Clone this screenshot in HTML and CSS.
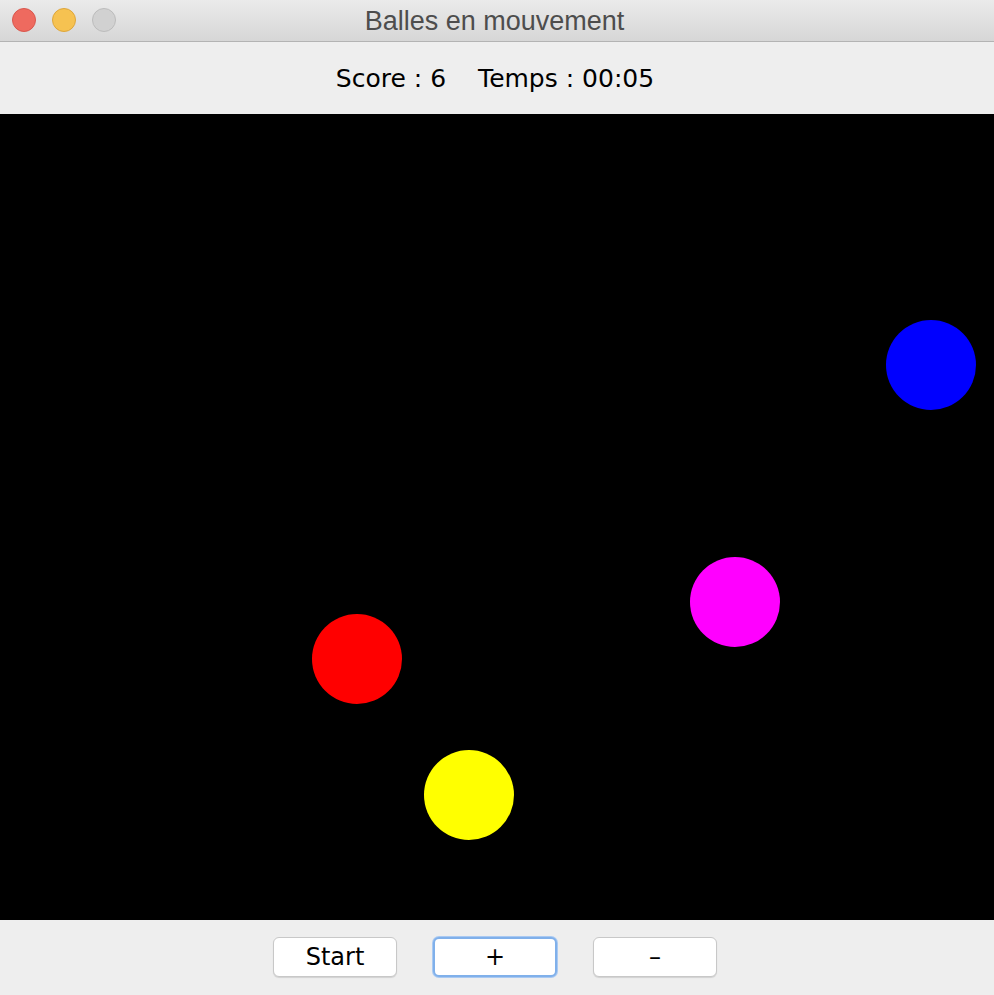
FILE: index.html
```html
<!DOCTYPE html>
<html lang="fr">
<head>
<meta charset="utf-8">
<title>Balles en mouvement</title>
<link rel="stylesheet" href="styles.css">
</head>
<body>
<div class="window">
  <div class="titlebar">
    <div class="lights">
      <span class="light red"></span>
      <span class="light yellow"></span>
      <span class="light grey"></span>
    </div>
    <div class="title">Balles en mouvement</div>
  </div>
  <div class="header">
    <span>Score : 6</span>
    <span>Temps : 00:05</span>
  </div>
  <div class="canvas">
    <span class="ball blue" style="left:886px;top:206px"></span>
    <span class="ball magenta" style="left:690px;top:443px"></span>
    <span class="ball red" style="left:312px;top:500px"></span>
    <span class="ball yellow" style="left:424px;top:636px"></span>
  </div>
  <div class="controls">
    <button class="btn">Start</button>
    <button class="btn focus">+</button>
    <button class="btn">–</button>
  </div>
</div>
</body>
</html>
```
FILE: styles.css
```css
* { box-sizing: border-box; }
html, body { margin: 0; padding: 0; background: #ececec; }
.window { width: 994px; height: 995px; display: flex; flex-direction: column; overflow: hidden; }
.titlebar {
  height: 42px;
  flex: none;
  position: relative;
  display: flex;
  align-items: center;
  justify-content: center;
  background: linear-gradient(#ebebeb, #d6d6d6);
  border-bottom: 1px solid #b3b3b3;
}
.lights { position: absolute; left: 12px; top: 8px; display: flex; gap: 16px; }
.light { width: 24px; height: 24px; border-radius: 50%; display: block; }
.light.red { background: #ee6a5f; border: 1px solid #d9574d; }
.light.yellow { background: #f6c251; border: 1px solid #dea63b; }
.light.grey { background: #d1d1d1; border: 1px solid #bcbcbc; }
.title {
  font-family: "Liberation Sans", Arial, sans-serif;
  font-size: 27px;
  color: #4d4d4d;
  padding-top: 1px;
  padding-right: 5px;
}
.header {
  height: 72px;
  flex: none;
  background: #eeeeee;
  display: flex;
  justify-content: center;
  align-items: center;
  gap: 32px;
  font-family: "DejaVu Sans", sans-serif;
  font-size: 25px;
  color: #000;
  padding-right: 4px;
}
.canvas { height: 806px; flex: none; background: #000; position: relative; }
.ball { position: absolute; width: 90px; height: 90px; border-radius: 50%; }
.ball.blue { background: #0000ff; }
.ball.magenta { background: #ff00ff; }
.ball.red { background: #ff0000; }
.ball.yellow { background: #ffff00; }
.controls {
  flex: 1;
  background: #eeeeee;
  display: flex;
  justify-content: center;
  align-items: flex-start;
  padding-top: 17px;
  padding-right: 4px;
  gap: 36px;
}
.btn {
  width: 124px;
  height: 40px;
  background: #fff;
  border: 1px solid #c8c8c8;
  border-radius: 6px;
  box-shadow: 0 1px 1px rgba(0,0,0,0.12);
  font-family: "DejaVu Sans", sans-serif;
  font-size: 24px;
  color: #000;
  padding: 0;
  margin: 0;
}
.btn.focus { border: 2px solid #80b0ea; box-shadow: 0 0 0 1px #a9c9f2; }
```
